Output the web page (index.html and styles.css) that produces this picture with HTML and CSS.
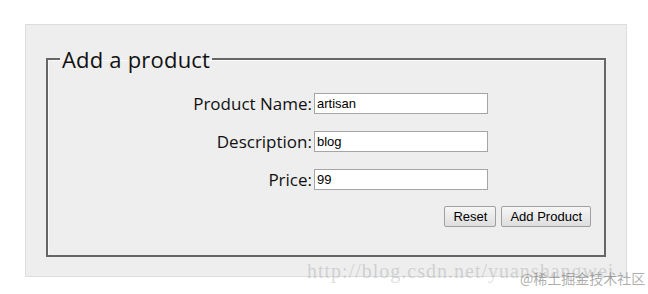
FILE: index.html
```html
<!DOCTYPE html>
<html lang="en">
<head>
    <meta charset="UTF-8">
    <title>Add a product</title>
    <link rel="stylesheet" href="styles.css">
</head>
<body>
    <div class="panel">
        <fieldset class="product-form">
            <legend>Add a product</legend>
            <div class="row">
                <label for="name">Product Name:</label>
                <input id="name" type="text" value="artisan">
            </div>
            <div class="row">
                <label for="desc">Description:</label>
                <input id="desc" type="text" value="blog">
            </div>
            <div class="row">
                <label for="price">Price:</label>
                <input id="price" type="text" value="99">
            </div>
            <div class="actions">
                <button type="reset">Reset</button>
                <button type="submit">Add Product</button>
            </div>
        </fieldset>
    </div>
    <div class="mark-url">http://blog.csdn.net/yuanshangwei</div>
    <div class="mark-site">@稀土掘金技术社区</div>
</body>
</html>
```

FILE: styles.css
```css
* {
    box-sizing: border-box;
}

body {
    margin: 0;
    background: #fff;
    font-family: "Open Sans", "Noto Sans", sans-serif;
    color: #111;
    position: relative;
    height: 294px;
    overflow: hidden;
}

.panel {
    margin: 24px 0 0 25px;
    width: 602px;
    height: 253px;
    padding: 19px 20px 20px 20px;
    background: #eee;
    border: 1px solid #ddd;
}

.product-form {
    margin: 0;
    height: 213px;
    padding: 10px 12px 0 12px;
    border: 2px solid #666;
    box-shadow: inset 1px 1px 0 #fafafa;
}

.product-form legend {
    font-size: 22px;
    padding: 0 2px;
    letter-spacing: 0.2px;
    color: #111;
}

.row {
    display: flex;
    align-items: center;
    height: 38px;
}

.row label {
    width: 254px;
    padding-right: 2px;
    text-align: right;
    font-size: 17px;
}

.row input {
    width: 174px;
    height: 21px;
    margin: 0;
    padding: 1px 2px;
    border: 1px solid #a5a5a5;
    background: #fff;
    font-family: "Liberation Sans", Arial, sans-serif;
    font-size: 13px;
    color: #000;
}

.actions {
    display: flex;
    justify-content: flex-end;
    gap: 5px;
    margin-top: 8px;
    padding-right: 1px;
}

.actions button {
    height: 21px;
    padding: 0 8px;
    border: 1px solid #a0a0a0;
    border-radius: 2px;
    background: linear-gradient(#f6f6f6, #dedede);
    font-family: "Liberation Sans", Arial, sans-serif;
    font-size: 13px;
    color: #000;
}

.mark-url {
    position: absolute;
    left: 307px;
    top: 260px;
    font-family: "Liberation Serif", serif;
    font-size: 20px;
    color: rgba(150, 150, 150, 0.35);
    letter-spacing: 1px;
    white-space: nowrap;
}

.mark-site {
    position: absolute;
    left: 520px;
    top: 268px;
    font-family: "Noto Sans CJK SC", sans-serif;
    font-size: 14px;
    color: rgba(120, 120, 120, 0.6);
    white-space: nowrap;
}
```
